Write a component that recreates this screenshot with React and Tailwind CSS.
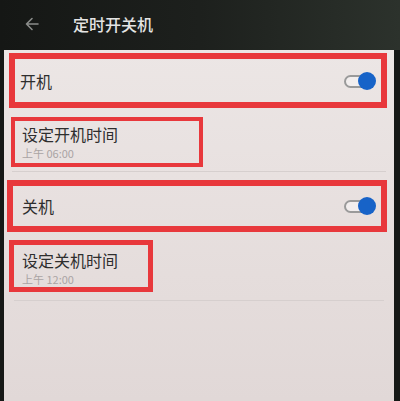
import React from "react";

function Toggle() {
  return (
    <div className="relative h-[18px] w-[32px] shrink-0">
      <div className="absolute left-0 top-[3px] h-[13px] w-[26px] rounded-full border-2 border-[#9a9a9a] bg-[#f2eeee]" />
      <div className="absolute right-0 top-0 h-[18px] w-[18px] rounded-full bg-[#1763c8]" />
    </div>
  );
}

export default function App() {
  const font = { fontFamily: '"Noto Sans CJK SC", "Noto Sans", sans-serif' };
  return (
    <div
      className="flex h-[401px] w-[400px] flex-col overflow-hidden bg-[#161816]"
      style={font}
    >
      <div className="flex h-[50px] shrink-0 items-center bg-gradient-to-r from-[#151715] via-[#1d201d] to-[#2c322c] pb-[2px]">
        <svg className="ml-[24px] h-[16px] w-[16px]" viewBox="0 0 16 16" fill="none" stroke="#8a8c8a" strokeWidth="1.6" strokeLinecap="round" strokeLinejoin="round">
          <path d="M14 8H2.5M8 2.5L2.5 8L8 13.5" />
        </svg>
        <span className="ml-[33px] text-[16px] font-medium leading-none text-[#e4e4e4]">定时开关机</span>
      </div>
      <div className="ml-[4px] mr-[6px] flex flex-1 flex-col bg-gradient-to-b from-[#ece6e5] to-[#e1d8d7]">
        <div className="ml-[5px] mt-[3px] flex h-[55px] w-[378px] items-center justify-between border-[6px] border-[#e8383c] pl-[5px] pr-[5px]">
          <span className="text-[16px] leading-none text-[#2e2e2e]">开机</span>
          <Toggle />
        </div>
        <div className="ml-[7px] mt-[9px] flex h-[50px] w-[192px] flex-col border-[4px] border-[#e8383c] pl-[7px] pt-[4px]">
          <span className="text-[16px] leading-[18px] text-[#2e2e2e]">设定开机时间</span>
          <span className="mt-[4px] text-[11px] leading-[12px] text-[#aaa4a4]">上午 06:00</span>
        </div>
        <div className="mx-[8px] mt-[4px] h-px bg-[#d6cfce]" />
        <div className="ml-[3px] mt-[8px] flex h-[52px] w-[380px] items-center justify-between border-[6px] border-[#e8383c] pl-[9px] pr-[5px]">
          <span className="text-[16px] leading-none text-[#2e2e2e]">关机</span>
          <Toggle />
        </div>
        <div className="ml-[5px] mt-[8px] flex h-[52px] w-[144px] flex-col border-[5px] border-[#e8383c] pl-[8px] pt-[6px]">
          <span className="text-[16px] leading-[18px] text-[#2e2e2e]">设定关机时间</span>
          <span className="mt-[4px] text-[11px] leading-[12px] text-[#aaa4a4]">上午 12:00</span>
        </div>
        <div className="mx-[10px] mt-[8px] h-px bg-[#d6cfce]" />
      </div>
    </div>
  );
}
